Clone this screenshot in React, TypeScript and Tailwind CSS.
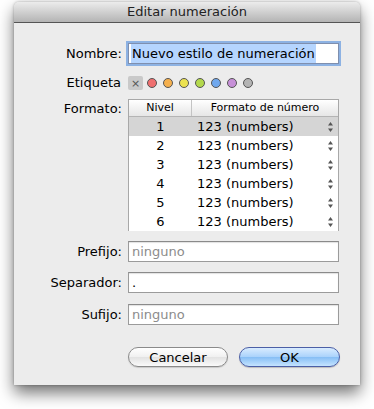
import { useState } from 'react';

const labelColors = ['#f07070', '#f5b04e', '#ece250', '#b4d94d', '#70a8ee', '#c790d8', '#b4b4b4'];

const levels = [1, 2, 3, 4, 5, 6];

function FieldRow({ label, value, placeholder, className }: { label: string; value?: string; placeholder?: string; className?: string }) {
  return (
    <div className={`flex items-center ${className ?? ''}`}>
      <div className="w-[108px] text-right text-[13px] text-black">{label}</div>
      <div className="ml-[6px] flex h-[21px] w-[211px] items-center border border-[#9b9b9b] border-t-[#8a8a8a] bg-white pl-[3px] text-[13px] shadow-[inset_0_1px_1px_rgba(0,0,0,0.12)]">
        {value ? <span className="text-black">{value}</span> : <span className="text-[#8c8c8c]">{placeholder}</span>}
      </div>
    </div>
  );
}

function Stepper() {
  return (
    <svg width="7" height="12" viewBox="0 0 7 12" className="block">
      <path d="M3.5 1 L6 4.5 L1 4.5 Z" fill="#555" />
      <path d="M3.5 11 L6 7.5 L1 7.5 Z" fill="#555" />
    </svg>
  );
}

export default function App() {
  const [selected, setSelected] = useState(1);

  return (
    <div className="h-[409px] w-[374px] bg-white pt-[2px] pl-[14px]" style={{ fontFamily: '"DejaVu Sans", "Liberation Sans", sans-serif' }}>
      <div className="flex h-[383px] w-[346px] flex-col rounded-t-[5px] bg-[#ececec] shadow-[0_8px_16px_rgba(0,0,0,0.55),0_0_3px_rgba(0,0,0,0.3)]">
        {/* title bar */}
        <div className="flex h-[21px] items-center justify-center rounded-t-[5px] border-b border-[#555] bg-[linear-gradient(to_bottom,#ececec,#b4b4b4)] text-[13px] text-[#222]">
          Editar numeración
        </div>

        {/* Nombre */}
        <div className="mt-[20px] flex items-center">
          <div className="w-[108px] text-right text-[13px] text-black">Nombre:</div>
          <div className="ml-[6px] flex h-[21px] w-[211px] items-center border border-[#7f8fae] bg-white pl-[2px] text-[13px] shadow-[0_0_0_2px_#8db2e3]">
            <span className="bg-[#b5d5ff] px-[1px] text-black">Nuevo estilo de numeración</span>
          </div>
        </div>

        {/* Etiqueta */}
        <div className="mt-[12px] flex h-[14px] items-center">
          <div className="w-[107px] text-right text-[13px] text-black">Etiqueta</div>
          <div className="ml-[7px] flex h-[14px] w-[15px] items-center justify-center rounded-[2px] bg-[#c9c9c9] text-[11px] leading-none text-[#555]">
            ×
          </div>
          <div className="ml-[4px] flex items-center gap-[6px]">
            {labelColors.map((c) => (
              <span key={c} className="block h-[10px] w-[10px] rounded-full border border-[#555]" style={{ backgroundColor: c }} />
            ))}
          </div>
        </div>

        {/* Formato */}
        <div className="mt-[9px] flex items-start">
          <div className="w-[108px] pt-[1px] text-right text-[13px] leading-[17px] text-black">Formato:</div>
          <div className="ml-[6px] h-[132px] w-[211px] border border-[#a8a8a8] bg-white">
            <div className="flex h-[17px] border-b border-[#b4b4b4] bg-[linear-gradient(to_bottom,#ffffff,#e6e6e6)] text-[11px] leading-[16px] text-black">
              <div className="w-[63px] border-r border-[#c4c4c4] text-center">Nivel</div>
              <div className="flex-1 text-center">Formato de número</div>
            </div>
            {levels.map((n) => (
              <div
                key={n}
                onClick={() => setSelected(n)}
                className={`flex h-[19px] items-center text-[13px] text-black ${selected === n ? 'bg-[#d5d5d5]' : 'bg-white'}`}
              >
                <div className="w-[63px] text-center">{n}</div>
                <div className="flex-1 pl-[5px]">123 (numbers)</div>
                <div className="mr-[4px]">
                  <Stepper />
                </div>
              </div>
            ))}
          </div>
        </div>

        <FieldRow label="Prefijo:" placeholder="ninguno" className="mt-[10px]" />
        <FieldRow label="Separador:" value="." className="mt-[10px]" />
        <FieldRow label="Sufijo:" placeholder="ninguno" className="mt-[11px]" />

        {/* buttons */}
        <div className="mt-[22px] flex pl-[114px]">
          <button className="h-[20px] w-[100px] rounded-full border border-[#8a8a8a] bg-[linear-gradient(to_bottom,#ffffff,#f0f0f0_50%,#e2e2e2_51%,#fafafa)] text-[13px] leading-none text-black shadow-[0_1px_1px_rgba(0,0,0,0.15)]">
            Cancelar
          </button>
          <button className="ml-[11px] h-[20px] w-[101px] rounded-full border border-[#4b5fa6] bg-[linear-gradient(to_bottom,#d9ecff,#a9d2fb_50%,#86bef5_51%,#c5e4ff)] text-[13px] leading-none text-black shadow-[0_1px_1px_rgba(0,0,0,0.2)]">
            OK
          </button>
        </div>
      </div>
    </div>
  );
}
